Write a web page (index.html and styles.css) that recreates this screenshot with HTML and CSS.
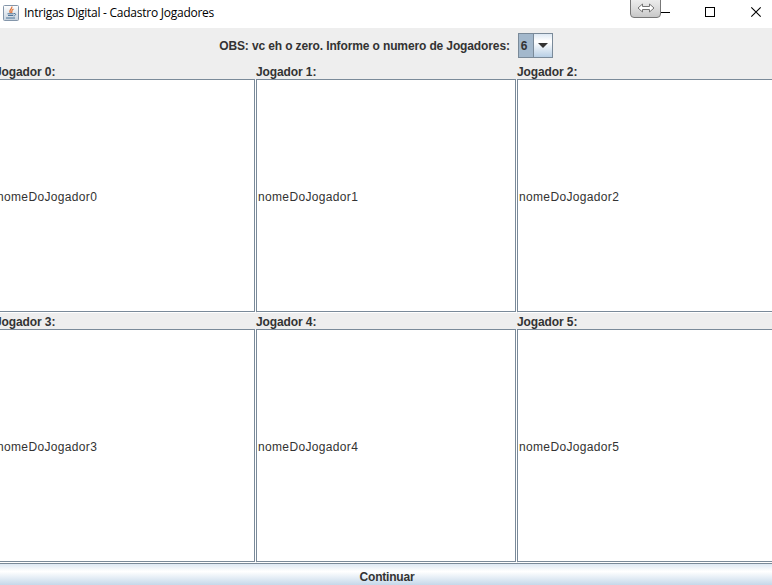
FILE: index.html
```html
<!DOCTYPE html>
<html lang="pt-BR">
<head>
<meta charset="utf-8">
<title>Intrigas Digital - Cadastro Jogadores</title>
<link rel="stylesheet" href="styles.css">
</head>
<body>
<div class="window">
  <header class="titlebar">
    <svg class="app-icon" width="16" height="16" viewBox="0 0 16 16">
      <defs><linearGradient id="g" x1="0" y1="0" x2="0" y2="1"><stop offset="0" stop-color="#fff"/><stop offset="1" stop-color="#c6d2de"/></linearGradient></defs>
      <rect x=".5" y=".5" width="15" height="15" rx="1" fill="url(#g)" stroke="#8496aa"/>
      <path d="M8.800 1.500C9.800 4 5 4.700 7.500 8M10.500 4C7.500 5.500 9.500 6.500 8.500 8" fill="none" stroke="#e2763c" stroke-width="1.300"/>
      <path d="M4.500 8.800h6.300M5 10.500h5.200M3 13h9M11 8.500c2.500-.3 2 2-.3 2.500" fill="none" stroke="#4d7498"/>
    </svg>
    <h1 class="title">Intrigas Digital - Cadastro Jogadores</h1>
    <div class="controls">
      <svg width="142" height="28" viewBox="0 0 142 28">
        <path d="M31 12.500h9" stroke="#000"/>
        <rect x="75.500" y="7.500" width="9" height="9" fill="none" stroke="#000"/>
        <path d="M121.300 7.300l9.400 9.400M130.700 7.300l-9.400 9.400" stroke="#000" stroke-width="1.100"/>
      </svg>
      <div class="resize-tab">
        <svg width="18" height="10" viewBox="0 0 18 10"><path d="M1 5l4.500-4v2.500h7V1L17 5l-4.500 4V6.500h-7V9z" fill="#fff" stroke="#666" stroke-width=".9"/></svg>
      </div>
    </div>
  </header>
  <div class="toolbar">
    <label class="prompt">OBS: vc eh o zero. Informe o numero de Jogadores:</label>
    <div class="combo"><span class="combo-value">6</span><span class="combo-arrow"><svg width="10" height="5" viewBox="0 0 10 5"><path d="M0 0h10L5 5z" fill="#333"/></svg></span></div>
  </div>
  <main class="grid">
    <section class="player"><label>Jogador 0:</label><div class="field"><span>nomeDoJogador0</span></div></section>
    <section class="player"><label>Jogador 1:</label><div class="field"><span>nomeDoJogador1</span></div></section>
    <section class="player"><label>Jogador 2:</label><div class="field"><span>nomeDoJogador2</span></div></section>
    <section class="player"><label>Jogador 3:</label><div class="field"><span>nomeDoJogador3</span></div></section>
    <section class="player"><label>Jogador 4:</label><div class="field"><span>nomeDoJogador4</span></div></section>
    <section class="player"><label>Jogador 5:</label><div class="field"><span>nomeDoJogador5</span></div></section>
  </main>
  <button class="continue">Continuar</button>
</div>
</body>
</html>
```
FILE: styles.css
```css
* { box-sizing: border-box; }
body { margin: 0; overflow: hidden; }
.window {
  width: 772px; height: 585px; overflow: hidden;
  display: flex; flex-direction: column;
  background: #eee; color: #333;
  font: bold 12px/16px "Liberation Sans", Arial, sans-serif;
}
.titlebar {
  flex: 0 0 28px; display: flex; align-items: center;
  background: #fff; padding-left: 3px; color: #000;
}
.app-icon { margin-top: -3px; margin-right: 5px; }
.title { margin: -3px 0 0; font: 12px/16px "Open Sans", "Noto Sans", sans-serif; letter-spacing: -0.25px; white-space: nowrap; }
.controls { position: relative; margin-left: auto; width: 142px; height: 28px; }
.controls > svg { display: block; }
.resize-tab {
  position: absolute; left: 0; top: -2px; width: 31px; height: 20px;
  display: flex; align-items: center; justify-content: center;
  border: 1px solid #777; border-radius: 0 0 4px 4px;
  background: linear-gradient(#eee, #ddd 50%, #c8c8c8);
}
.toolbar { flex: 0 0 35px; display: flex; justify-content: center; align-items: center; gap: 8px; }
.prompt { white-space: nowrap; letter-spacing: -0.125px; }
.combo {
  width: 35px; height: 25px; display: flex;
  border: 1px solid #7a8a99; background: #a3b8cc;
}
.combo-value { width: 14px; padding-left: 2px; line-height: 24px; }
.combo-arrow {
  flex: 1; display: flex; align-items: center; justify-content: center;
  border-left: 1px solid #7a8a99;
  background: linear-gradient(#dde8f3, #fff 30%, #fff 35%, #b8cfe5);
}
.grid {
  flex: 0 0 500px; width: 783px; margin-left: -5px;
  display: grid; grid-template-columns: repeat(3, 261px); grid-template-rows: repeat(2, 250px);
}
.player { display: flex; flex-direction: column; }
.player label { height: 16px; line-height: 18px; letter-spacing: -0.1px; }
.field {
  flex: 1; display: flex; align-items: center; padding: 2px 0 0 1px;
  margin: 0 1px 1px 0;
  background: #fff; border: 1px solid #7a8a99;
  box-shadow: 1px 1px #fff;
  font-weight: normal; letter-spacing: 0.34px;
}
.continue {
  flex: 0 0 26px; width: 783px; margin-left: -5px; padding: 1px 0 0 1px;
  border: 1px solid #7a8a99; color: #333; font: inherit; letter-spacing: -0.2px;
  background: linear-gradient(#dde8f3, #fff 30%, #fff 32%, #b8cfe5);
}
```
